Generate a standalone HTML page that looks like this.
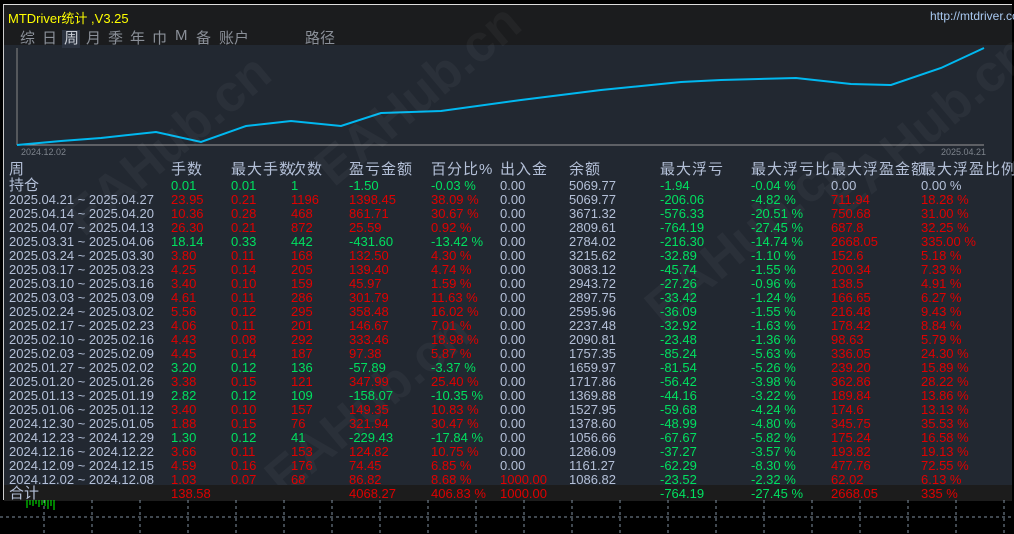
<!DOCTYPE html>
<html><head><meta charset="utf-8"><style>
*{margin:0;padding:0;box-sizing:border-box}
body{width:1014px;height:534px;background:#000;position:relative;overflow:hidden;font-family:"Liberation Sans","Noto Sans CJK SC",sans-serif;font-size:13px;color:#b4c0d8}
#panel{position:absolute;left:3px;top:4px;width:1009px;height:496px;background:#222831;border-top:1px solid #ddd;border-left:1px solid #ccc}
#title{position:absolute;left:0;top:0;width:100%;height:40px;background:#1b1c1e}
.t{position:absolute;white-space:nowrap}
.r{position:absolute;left:0;width:100%;height:14px;line-height:14px}
.r span{position:absolute;white-space:nowrap}
.r span:nth-child(1){left:5px;color:#b4c0d8}
.r span:nth-child(2){left:167px}
.r span:nth-child(3){left:227px}
.r span:nth-child(4){left:287px}
.r span:nth-child(5){left:345px}
.r span:nth-child(6){left:427px}
.r span:nth-child(7){left:496px;color:#b4c0d8}
.r span:nth-child(8){left:565px;color:#b4c0d8}
.r span:nth-child(9){left:656px;color:#00e060}
.r span:nth-child(10){left:747px;color:#00e060}
.r span:nth-child(11){left:827px;color:#e00000}
.r span:nth-child(12){left:917px;color:#e00000}
.R span:nth-child(n+2):nth-child(-n+6){color:#e00000}
.G span:nth-child(n+2):nth-child(-n+6){color:#00e060}
.hd span{color:#b4c0d8!important;font-size:15px;letter-spacing:1px}
.wm{position:absolute;color:rgba(255,255,255,0.04);font-size:52px;font-weight:bold;transform:rotate(-40deg);white-space:nowrap}
.tb{position:absolute;top:22px;color:#8a8f98;font-size:15px}
</style></head><body>
<div id="panel">
<div id="title"></div>
<div class="t" style="left:4px;top:3px;color:#ffff00;font-size:13px">MTDriver统计 ,V3.25</div>
<div class="t" style="left:926px;top:4px;color:#a8c8f0;font-size:12px">http://mtdriver.com</div>
<div class="t" style="left:58px;top:25px;width:18px;height:18px;background:#2c3340"></div>
<span class="tb" style="left:16px">综</span><span class="tb" style="left:38px">日</span><span class="tb" style="left:60px;color:#c8ccd4">周</span><span class="tb" style="left:82px">月</span><span class="tb" style="left:104px">季</span><span class="tb" style="left:126px">年</span><span class="tb" style="left:148px">巾</span><span class="tb" style="left:171px">M</span><span class="tb" style="left:192px">备</span><span class="tb" style="left:215px">账户</span><span class="tb" style="left:301px">路径</span>
<svg style="position:absolute;left:0;top:40px" width="1009" height="115">
<line x1="13" y1="3" x2="13" y2="100" stroke="#888" stroke-width="1"/>
<line x1="13" y1="100" x2="980" y2="100" stroke="#999" stroke-width="1"/>
<polyline fill="none" stroke="#00b8f0" stroke-width="2" points="13,100 57,96 97,93 152,87 197,97 242,81 287,76 337,81 377,68 437,66 517,55 597,45 677,37 717,35 792,33 847,39 887,40 937,23 980,3"/>
<text x="17" y="110" fill="#7d838c" font-size="9" font-family="Liberation Sans">2024.12.02</text>
<text x="937" y="110" fill="#7d838c" font-size="9" font-family="Liberation Sans">2025.04.21</text>
</svg>
<div class="wm" style="left:40px;top:110px">EAHub.cn</div>
<div class="wm" style="left:290px;top:60px">EAHub.cn</div>
<div class="wm" style="left:800px;top:90px">EAHub.cn</div>
<div class="wm" style="left:240px;top:370px">EAHub.cn</div>
<div class="wm" style="left:620px;top:200px">EAHub.cn</div>
<div class="r hd" style="top:158px"><span>周</span><span>手数</span><span>最大手数</span><span>次数</span><span>盈亏金额</span><span>百分比%</span><span>出入金</span><span>余额</span><span>最大浮亏</span><span>最大浮亏比</span><span>最大浮盈金额</span><span>最大浮盈比例</span></div>
<div class="r G" style="top:174px"><span style="font-size:15px">持仓</span><span>0.01</span><span>0.01</span><span>1</span><span>-1.50</span><span>-0.03 %</span><span>0.00</span><span>5069.77</span><span>-1.94</span><span>-0.04 %</span><span style="color:#b4c0d8">0.00</span><span style="color:#b4c0d8">0.00 %</span></div>
<div class="r R" style="top:188px"><span>2025.04.21 ~ 2025.04.27</span><span>23.95</span><span>0.21</span><span>1196</span><span>1398.45</span><span>38.09 %</span><span>0.00</span><span>5069.77</span><span>-206.06</span><span>-4.82 %</span><span>711.94</span><span>18.28 %</span></div>
<div class="r R" style="top:202px"><span>2025.04.14 ~ 2025.04.20</span><span>10.36</span><span>0.28</span><span>468</span><span>861.71</span><span>30.67 %</span><span>0.00</span><span>3671.32</span><span>-576.33</span><span>-20.51 %</span><span>750.68</span><span>31.00 %</span></div>
<div class="r R" style="top:216px"><span>2025.04.07 ~ 2025.04.13</span><span>26.30</span><span>0.21</span><span>872</span><span>25.59</span><span>0.92 %</span><span>0.00</span><span>2809.61</span><span>-764.19</span><span>-27.45 %</span><span>687.8</span><span>32.25 %</span></div>
<div class="r G" style="top:230px"><span>2025.03.31 ~ 2025.04.06</span><span>18.14</span><span>0.33</span><span>442</span><span>-431.60</span><span>-13.42 %</span><span>0.00</span><span>2784.02</span><span>-216.30</span><span>-14.74 %</span><span>2668.05</span><span>335.00 %</span></div>
<div class="r R" style="top:244px"><span>2025.03.24 ~ 2025.03.30</span><span>3.80</span><span>0.11</span><span>168</span><span>132.50</span><span>4.30 %</span><span>0.00</span><span>3215.62</span><span>-32.89</span><span>-1.10 %</span><span>152.6</span><span>5.18 %</span></div>
<div class="r R" style="top:258px"><span>2025.03.17 ~ 2025.03.23</span><span>4.25</span><span>0.14</span><span>205</span><span>139.40</span><span>4.74 %</span><span>0.00</span><span>3083.12</span><span>-45.74</span><span>-1.55 %</span><span>200.34</span><span>7.33 %</span></div>
<div class="r R" style="top:272px"><span>2025.03.10 ~ 2025.03.16</span><span>3.40</span><span>0.10</span><span>159</span><span>45.97</span><span>1.59 %</span><span>0.00</span><span>2943.72</span><span>-27.26</span><span>-0.96 %</span><span>138.5</span><span>4.91 %</span></div>
<div class="r R" style="top:286px"><span>2025.03.03 ~ 2025.03.09</span><span>4.61</span><span>0.11</span><span>286</span><span>301.79</span><span>11.63 %</span><span>0.00</span><span>2897.75</span><span>-33.42</span><span>-1.24 %</span><span>166.65</span><span>6.27 %</span></div>
<div class="r R" style="top:300px"><span>2025.02.24 ~ 2025.03.02</span><span>5.56</span><span>0.12</span><span>295</span><span>358.48</span><span>16.02 %</span><span>0.00</span><span>2595.96</span><span>-36.09</span><span>-1.55 %</span><span>216.48</span><span>9.43 %</span></div>
<div class="r R" style="top:314px"><span>2025.02.17 ~ 2025.02.23</span><span>4.06</span><span>0.11</span><span>201</span><span>146.67</span><span>7.01 %</span><span>0.00</span><span>2237.48</span><span>-32.92</span><span>-1.63 %</span><span>178.42</span><span>8.84 %</span></div>
<div class="r R" style="top:328px"><span>2025.02.10 ~ 2025.02.16</span><span>4.43</span><span>0.08</span><span>292</span><span>333.46</span><span>18.98 %</span><span>0.00</span><span>2090.81</span><span>-23.48</span><span>-1.36 %</span><span>98.63</span><span>5.79 %</span></div>
<div class="r R" style="top:342px"><span>2025.02.03 ~ 2025.02.09</span><span>4.45</span><span>0.14</span><span>187</span><span>97.38</span><span>5.87 %</span><span>0.00</span><span>1757.35</span><span>-85.24</span><span>-5.63 %</span><span>336.05</span><span>24.30 %</span></div>
<div class="r G" style="top:356px"><span>2025.01.27 ~ 2025.02.02</span><span>3.20</span><span>0.12</span><span>136</span><span>-57.89</span><span>-3.37 %</span><span>0.00</span><span>1659.97</span><span>-81.54</span><span>-5.26 %</span><span>239.20</span><span>15.89 %</span></div>
<div class="r R" style="top:370px"><span>2025.01.20 ~ 2025.01.26</span><span>3.38</span><span>0.15</span><span>121</span><span>347.99</span><span>25.40 %</span><span>0.00</span><span>1717.86</span><span>-56.42</span><span>-3.98 %</span><span>362.86</span><span>28.22 %</span></div>
<div class="r G" style="top:384px"><span>2025.01.13 ~ 2025.01.19</span><span>2.82</span><span>0.12</span><span>109</span><span>-158.07</span><span>-10.35 %</span><span>0.00</span><span>1369.88</span><span>-44.16</span><span>-3.22 %</span><span>189.84</span><span>13.86 %</span></div>
<div class="r R" style="top:398px"><span>2025.01.06 ~ 2025.01.12</span><span>3.40</span><span>0.10</span><span>157</span><span>149.35</span><span>10.83 %</span><span>0.00</span><span>1527.95</span><span>-59.68</span><span>-4.24 %</span><span>174.6</span><span>13.13 %</span></div>
<div class="r R" style="top:412px"><span>2024.12.30 ~ 2025.01.05</span><span>1.88</span><span>0.15</span><span>76</span><span>321.94</span><span>30.47 %</span><span>0.00</span><span>1378.60</span><span>-48.99</span><span>-4.80 %</span><span>345.75</span><span>35.53 %</span></div>
<div class="r G" style="top:426px"><span>2024.12.23 ~ 2024.12.29</span><span>1.30</span><span>0.12</span><span>41</span><span>-229.43</span><span>-17.84 %</span><span>0.00</span><span>1056.66</span><span>-67.67</span><span>-5.82 %</span><span>175.24</span><span>16.58 %</span></div>
<div class="r R" style="top:440px"><span>2024.12.16 ~ 2024.12.22</span><span>3.66</span><span>0.11</span><span>153</span><span>124.82</span><span>10.75 %</span><span>0.00</span><span>1286.09</span><span>-37.27</span><span>-3.57 %</span><span>193.82</span><span>19.13 %</span></div>
<div class="r R" style="top:454px"><span>2024.12.09 ~ 2024.12.15</span><span>4.59</span><span>0.16</span><span>176</span><span>74.45</span><span>6.85 %</span><span>0.00</span><span>1161.27</span><span>-62.29</span><span>-8.30 %</span><span>477.76</span><span>72.55 %</span></div>
<div class="r R" style="top:468px"><span>2024.12.02 ~ 2024.12.08</span><span>1.03</span><span>0.07</span><span>68</span><span>86.82</span><span>8.68 %</span><span style="color:#e00000">1000.00</span><span>1086.82</span><span>-23.52</span><span>-2.32 %</span><span>62.02</span><span>6.13 %</span></div>
<div style="position:absolute;left:0;top:480px;width:100%;height:16px;background:#1c1c1c"></div>
<div class="r R" style="top:482px"><span style="font-size:15px">合计</span><span>138.58</span><span></span><span></span><span>4068.27</span><span>406.83 %</span><span style="color:#e00000">1000.00</span><span></span><span>-764.19</span><span>-27.45 %</span><span>2668.05</span><span>335 %</span></div>
</div>
<svg style="position:absolute;left:0;top:500px" width="1014" height="34">
<g stroke="#8090a0" stroke-dasharray="3,3" stroke-width="1">
<line x1="0" y1="17" x2="1014" y2="17"/>
<line x1="44" y1="0" x2="44" y2="34"/><line x1="92" y1="0" x2="92" y2="34"/><line x1="140" y1="0" x2="140" y2="34"/><line x1="188" y1="0" x2="188" y2="34"/><line x1="236" y1="0" x2="236" y2="34"/><line x1="284" y1="0" x2="284" y2="34"/><line x1="332" y1="0" x2="332" y2="34"/><line x1="380" y1="0" x2="380" y2="34"/><line x1="428" y1="0" x2="428" y2="34"/><line x1="476" y1="0" x2="476" y2="34"/><line x1="524" y1="0" x2="524" y2="34"/><line x1="572" y1="0" x2="572" y2="34"/><line x1="620" y1="0" x2="620" y2="34"/><line x1="668" y1="0" x2="668" y2="34"/><line x1="716" y1="0" x2="716" y2="34"/><line x1="764" y1="0" x2="764" y2="34"/><line x1="812" y1="0" x2="812" y2="34"/><line x1="860" y1="0" x2="860" y2="34"/><line x1="908" y1="0" x2="908" y2="34"/><line x1="956" y1="0" x2="956" y2="34"/><line x1="1004" y1="0" x2="1004" y2="34"/>
</g>
<g stroke="#00ff00" stroke-width="1">
<line x1="27" y1="0" x2="27" y2="8"/><line x1="30" y1="0" x2="30" y2="5"/><line x1="33" y1="0" x2="33" y2="6"/><line x1="36" y1="0" x2="36" y2="4"/><line x1="39" y1="0" x2="39" y2="7"/><line x1="42" y1="0" x2="42" y2="5"/><line x1="45" y1="0" x2="45" y2="6"/><line x1="48" y1="0" x2="48" y2="9"/><line x1="51" y1="0" x2="51" y2="6"/><line x1="54" y1="0" x2="54" y2="10"/>
</g>
</svg>
</body></html>
